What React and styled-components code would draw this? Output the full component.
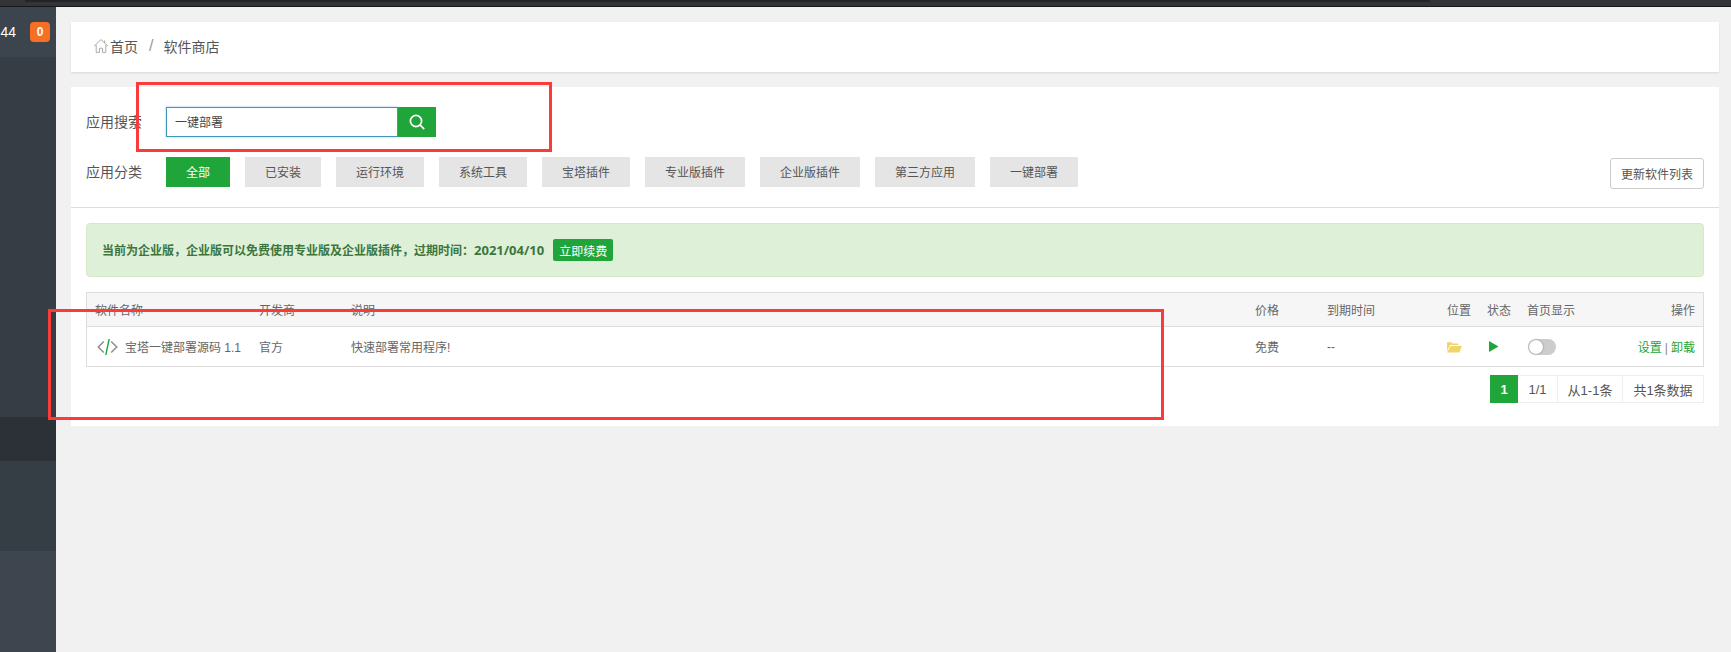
import React from "react";
import styled, { createGlobalStyle } from "styled-components";

const Global = createGlobalStyle`
  html, body { margin: 0; padding: 0; height: 100%; background: #f1f1f1; overflow: hidden; }
  body { font-family: "Liberation Sans", Arial, "Noto Sans CJK SC", sans-serif; font-size: 12px; color: #555; }
  #root { height: 100%; }
`;

const green = "#20a53a";

const Page = styled.div`
  position: relative;
  display: flex;
  flex-direction: column;
  height: 652px;
  width: 1731px;
  overflow: hidden;
`;
const TopStrip = styled.div`
  height: 7px;
  flex: none;
  background: #333438;
  border-bottom: 1px solid #17181a;
  box-sizing: border-box;
  padding-left: 25px;
`;
const TopTab = styled.div`
  width: 1405px;
  height: 2px;
  background: #232427;
`;
const Body = styled.div`
  flex: 1;
  display: flex;
  min-height: 0;
`;
const Sidebar = styled.aside`
  width: 56px;
  flex: none;
  display: flex;
  flex-direction: column;
`;
const SideHead = styled.div`
  height: 50px;
  flex: none;
  background: #3c444e;
  display: flex;
  align-items: center;
  justify-content: flex-end;
  gap: 14px;
  padding-right: 6px;
  box-sizing: border-box;
  overflow: hidden;
  color: #fff;
  font-size: 14px;
`;
const Badge = styled.span`
  width: 20px;
  height: 20px;
  border-radius: 4px;
  background: #f76f22;
  color: #fff;
  font-size: 12px;
  font-weight: 700;
  display: flex;
  align-items: center;
  justify-content: center;
`;
const Band = styled.div`
  background: ${(p) => p.$bg};
  height: ${(p) => (p.$h ? `${p.$h}px` : "auto")};
  flex: ${(p) => (p.$h ? "none" : "1")};
`;
const Main = styled.main`
  flex: 1;
  min-width: 0;
  padding: 15px 12px 0 15px;
  display: flex;
  flex-direction: column;
  gap: 15px;
`;
const Crumbs = styled.nav`
  height: 50px;
  flex: none;
  box-sizing: border-box;
  background: #fff;
  box-shadow: 0 1px 2px rgba(0, 0, 0, 0.1);
  display: flex;
  align-items: center;
  padding: 0 0 3px 22px;
  font-size: 14px;
  color: #555;
`;
const CrumbLink = styled.span`
  display: flex;
  align-items: center;
  gap: 1px;
`;
const CrumbSep = styled.span`
  color: #999;
  font-size: 16px;
  margin: 0 10px 0 11px;
`;
const StoreCard = styled.section`
  background: #fff;
  height: 339px;
  flex: none;
  display: flex;
  flex-direction: column;
`;
const Filters = styled.div`
  height: 121px;
  flex: none;
  box-sizing: border-box;
  padding: 20px 15px 0;
  border-bottom: 1px solid #ddd;
  display: flex;
  flex-direction: column;
  gap: 20px;
`;
const FilterRow = styled.div`
  display: flex;
  align-items: center;
  height: 30px;
`;
const FilterLabel = styled.span`
  width: 80px;
  flex: none;
  font-size: 14px;
  color: #555;
  padding-bottom: 3px;
`;
const SearchInput = styled.div`
  width: 232px;
  height: 30px;
  box-sizing: border-box;
  border: 1px solid #3f97ba;
  box-shadow: 0 0 2px rgba(102, 175, 233, 0.7);
  padding: 0 0 2px 8px;
  display: flex;
  align-items: center;
  color: #444;
`;
const SearchButton = styled.button`
  width: 38px;
  height: 30px;
  border: 0;
  padding: 0;
  background: ${green};
  display: flex;
  align-items: center;
  justify-content: center;
`;
const Tabs = styled.div`
  display: flex;
  gap: 15px;
  flex: 1;
`;
const Tab = styled.span`
  width: ${(p) => p.$w}px;
  height: 30px;
  box-sizing: border-box;
  padding-bottom: 1px;
  display: flex;
  align-items: center;
  justify-content: center;
  background: ${(p) => (p.$active ? green : "#e5e5e5")};
  color: ${(p) => (p.$active ? "#fff" : "#555")};
`;
const UpdateButton = styled.button`
  width: 94px;
  height: 31px;
  margin-top: 3px;
  box-sizing: border-box;
  background: #fff;
  border: 1px solid #ccc;
  border-radius: 3px;
  color: #555;
  font: inherit;
  padding: 0;
`;
const Content = styled.div`
  padding: 15px 15px 0;
`;
const Alert = styled.div`
  height: 54px;
  box-sizing: border-box;
  background: #dff0d8;
  border: 1px solid #d6e9c6;
  border-radius: 4px;
  display: flex;
  align-items: center;
  padding-left: 15px;
  color: #3c763d;
  font-weight: 700;
  font-size: 12px;
  gap: 9px;
`;
const AlertDate = styled.span`
  font-family: "Open Sans", "Liberation Sans", sans-serif;
  font-size: 13px;
`;
const AlertLabel = styled.span`
  background: ${green};
  color: #fff;
  border-radius: 2px;
  height: 22px;
  padding: 0 6px;
  font-weight: 400;
  display: flex;
  align-items: center;
`;
const Table = styled.div`
  margin-top: 15px;
  border: 1px solid #ddd;
  color: #666;
`;
const Row = styled.div`
  display: grid;
  grid-template-columns: 164px 92px 904px 72px 120px 40px 40px 1fr auto;
  align-items: center;
  padding: 0 8px ${(p) => (p.$head ? 1 : 0)}px;
  height: ${(p) => p.$h}px;
  box-sizing: border-box;
  background: ${(p) => (p.$head ? "#f6f6f6" : "#fff")};
  border-bottom: ${(p) => (p.$head ? "1px solid #ddd" : "0")};
`;
const NameCell = styled.span`
  display: flex;
  align-items: center;
  gap: 7px;
  margin-left: 2px;
  white-space: nowrap;
`;
const IconCell = styled.span`
  display: flex;
  align-items: center;
  margin-left: ${(p) => p.$shift || 0}px;
`;
const Toggle = styled.span`
  position: relative;
  display: block;
  width: 28px;
  height: 16px;
  margin-left: 1px;
  border-radius: 8px;
  background: #ccc;
`;
const Knob = styled.span`
  position: absolute;
  top: 1px;
  left: 1px;
  width: 14px;
  height: 14px;
  border-radius: 50%;
  background: #fff;
  box-shadow: 0 0 2px rgba(0, 0, 0, 0.4);
`;
const Action = styled.a`
  color: ${green};
`;
const Pipe = styled.span`
  color: #888;
  margin: 0 3px;
`;
const Pager = styled.div`
  display: flex;
  justify-content: flex-end;
  margin-top: 8px;
`;
const PageCell = styled.span`
  height: 28px;
  box-sizing: border-box;
  width: ${(p) => p.$w}px;
  display: flex;
  align-items: center;
  justify-content: center;
  font-size: 13px;
  background: ${(p) => (p.$active ? green : "#fff")};
  color: ${(p) => (p.$active ? "#fff" : "#555")};
  border: 1px solid ${(p) => (p.$active ? green : "#eee")};
  border-left-width: ${(p) => (p.$active ? 1 : 0)}px;
  font-weight: ${(p) => (p.$active ? 700 : 400)};
`;
const RedMark = styled.div`
  position: absolute;
  left: ${(p) => p.$x}px;
  top: ${(p) => p.$y}px;
  width: ${(p) => p.$w}px;
  height: ${(p) => p.$h}px;
  box-sizing: border-box;
  border: 3px solid #fb3a3a;
  pointer-events: none;
`;

const tabs = [
  ["全部", 64, true],
  ["已安装", 76],
  ["运行环境", 88],
  ["系统工具", 88],
  ["宝塔插件", 88],
  ["专业版插件", 100],
  ["企业版插件", 100],
  ["第三方应用", 100],
  ["一键部署", 88],
];

const HomeIcon = () => (
  <svg width="16" height="16" viewBox="0 0 16 16" fill="none" stroke="#aaa" strokeWidth="1">
    <path d="M1 8.2 8 1.6l7 6.6M3.2 7v7.4h3.3v-4.2h3v4.2h3.3V7M11.5 2.5v2.6" />
  </svg>
);
const SearchIcon = () => (
  <svg width="18" height="18" viewBox="0 0 18 18" fill="none" stroke="#fff" strokeWidth="1.7">
    <circle cx="8" cy="8" r="5.6" />
    <path d="m12.2 12.2 4 4" />
  </svg>
);
const CodeIcon = () => (
  <svg width="21" height="16" viewBox="0 0 21 16" fill="none" strokeWidth="1.4">
    <path d="M6.8 2.5 1.2 8l5.6 5.5M14.2 2.5 19.8 8l-5.6 5.5" stroke="#8a8a8a" />
    <path d="M12.2 0 8.8 16" stroke={green} />
  </svg>
);
const FolderIcon = () => (
  <svg width="15" height="12" viewBox="0 0 15 12" fill="#f0d569">
    <path d="M0 10V1.2h4.6l1.2 1.3h5.4v1.6H3.2z" />
    <path d="M3.7 5H15l-2.6 6.6H0z" />
  </svg>
);
const PlayIcon = () => (
  <svg width="10" height="11" viewBox="0 0 10 11" fill={green}>
    <path d="M0 0l9.5 5.5L0 11z" />
  </svg>
);

export default function App() {
  return (
    <Page>
      <Global />
      <TopStrip>
        <TopTab />
      </TopStrip>
      <Body>
        <Sidebar>
          <SideHead>
            <span>44</span>
            <Badge>0</Badge>
          </SideHead>
          <Band $h={360} $bg="#363d45" />
          <Band $h={44} $bg="#2c3138" />
          <Band $h={90} $bg="#363e45" />
          <Band $bg="#3e454f" />
        </Sidebar>
        <Main>
          <Crumbs>
            <CrumbLink>
              <HomeIcon />
              首页
            </CrumbLink>
            <CrumbSep>/</CrumbSep>
            <span>软件商店</span>
          </Crumbs>
          <StoreCard>
            <Filters>
              <FilterRow>
                <FilterLabel>应用搜索</FilterLabel>
                <SearchInput>一键部署</SearchInput>
                <SearchButton aria-label="搜索">
                  <SearchIcon />
                </SearchButton>
              </FilterRow>
              <FilterRow>
                <FilterLabel>应用分类</FilterLabel>
                <Tabs>
                  {tabs.map(([t, w, a]) => (
                    <Tab key={t} $w={w} $active={a}>
                      {t}
                    </Tab>
                  ))}
                </Tabs>
                <UpdateButton>更新软件列表</UpdateButton>
              </FilterRow>
            </Filters>
            <Content>
              <Alert>
                <span>
                  当前为企业版，企业版可以免费使用专业版及企业版插件，过期时间：<AlertDate>2021/04/10</AlertDate>
                </span>
                <AlertLabel>立即续费</AlertLabel>
              </Alert>
              <Table>
                <Row $head $h={34}>
                  <span>软件名称</span>
                  <span>开发商</span>
                  <span>说明</span>
                  <span>价格</span>
                  <span>到期时间</span>
                  <span>位置</span>
                  <span>状态</span>
                  <span>首页显示</span>
                  <span>操作</span>
                </Row>
                <Row $h={39}>
                  <NameCell>
                    <CodeIcon />
                    宝塔一键部署源码 1.1
                  </NameCell>
                  <span>官方</span>
                  <span>快速部署常用程序!</span>
                  <span>免费</span>
                  <span>--</span>
                  <IconCell>
                    <FolderIcon />
                  </IconCell>
                  <IconCell $shift={2}>
                    <PlayIcon />
                  </IconCell>
                  <Toggle>
                    <Knob />
                  </Toggle>
                  <span>
                    <Action>设置</Action>
                    <Pipe>|</Pipe>
                    <Action>卸载</Action>
                  </span>
                </Row>
              </Table>
              <Pager>
                <PageCell $active $w={28}>1</PageCell>
                <PageCell $w={40}>1/1</PageCell>
                <PageCell $w={65}>从1-1条</PageCell>
                <PageCell $w={81}>共1条数据</PageCell>
              </Pager>
            </Content>
          </StoreCard>
        </Main>
      </Body>
      <RedMark $x={136} $y={82} $w={416} $h={70} />
      <RedMark $x={48} $y={309} $w={1116} $h={111} />
    </Page>
  );
}
